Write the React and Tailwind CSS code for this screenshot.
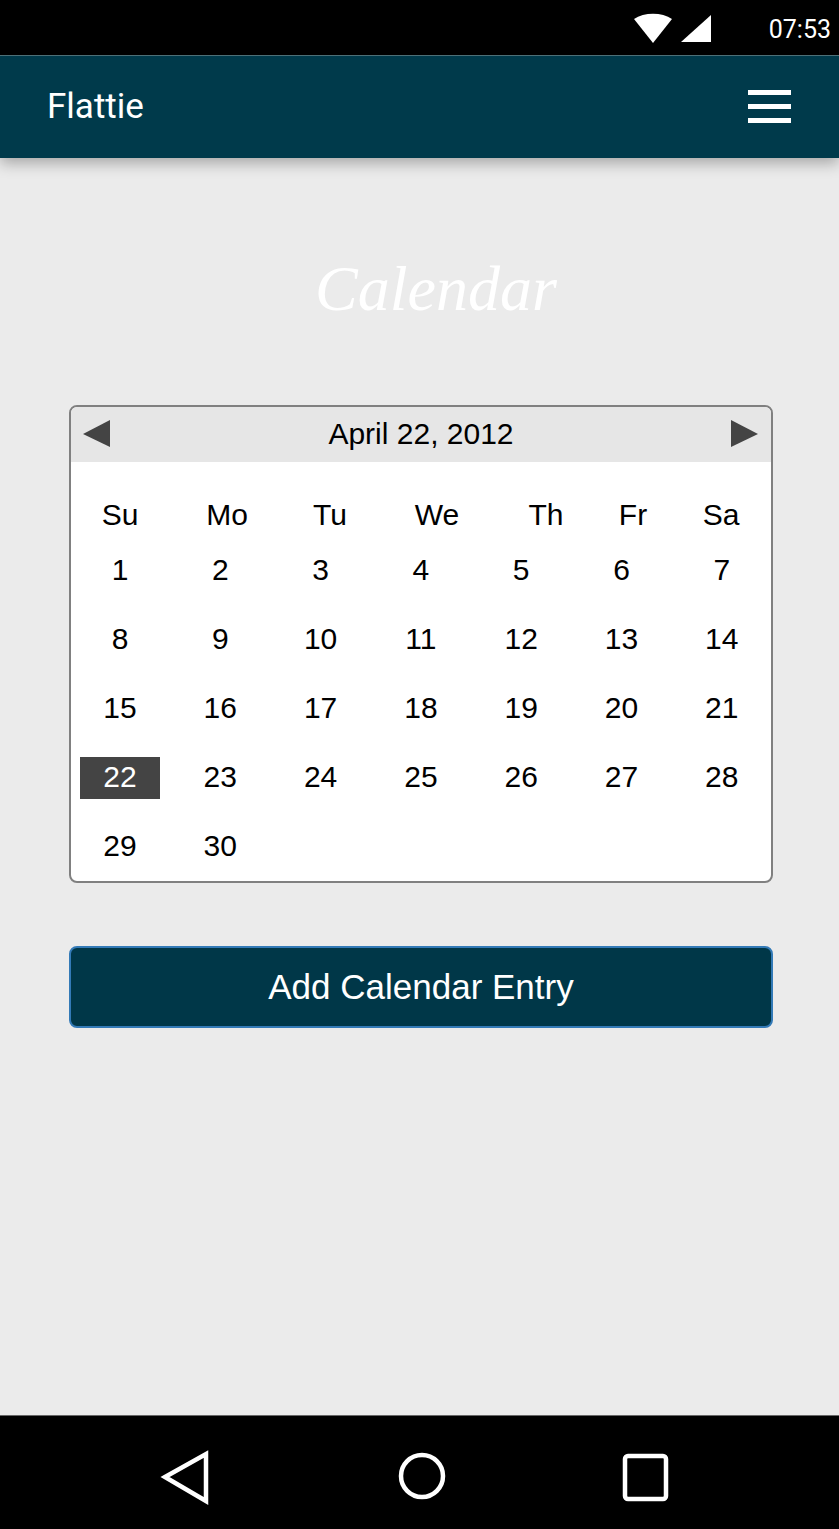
import React from "react";

const HEADERS = ["Su", "Mo", "Tu", "We", "Th", "Fr", "Sa"];
const DAYS = Array.from({ length: 30 }, (_, i) => i + 1);

function StatusBar() {
  return (
    <div className="h-[55px] bg-black flex items-center justify-end relative">
      <svg className="mr-[127px] mt-[3px]" width="78" height="32" viewBox="0 0 78 32">
        <path d="M0 6 C10 -1 28 -1 38 6 L19 30 Z" fill="#fff" />
        <path d="M47 29 L77 2 L77 29 Z" fill="#fff" />
      </svg>
      <span className="absolute right-[8px] top-[15px] text-[25px] leading-[30px] text-white font-['Roboto',sans-serif]">07:53</span>
    </div>
  );
}

function AppBar() {
  return (
    <div className="h-[103px] bg-[#003a4b] border-t border-[#4d7078] shadow-[0_5px_14px_rgba(0,0,0,0.3)] flex items-center justify-between pl-[47px] pr-[48px] relative z-10">
      <span className="text-[35px] leading-[44px] text-white font-['Roboto',sans-serif]">Flattie</span>
      <div className="flex flex-col gap-[9px] w-[43px] mt-[-2px]">
        <div className="h-[5px] bg-white" />
        <div className="h-[5px] bg-white" />
        <div className="h-[5px] bg-white" />
      </div>
    </div>
  );
}

function Calendar() {
  return (
    <div className="border-2 border-[#808080] rounded-[8px] bg-white overflow-hidden h-[478px]">
      <div className="h-[55px] bg-[#e6e6e6] flex items-center justify-between pl-[12px] pr-[13px] pb-[2px]">
        <svg width="28" height="28" viewBox="0 0 28 28"><path d="M0 14 L27 0 L27 27 Z" fill="#444" /></svg>
        <span className="text-[30px] leading-[36px] text-black ml-[1px]">April 22, 2012</span>
        <svg width="28" height="28" viewBox="0 0 28 28"><path d="M28 14 L1 0 L1 27 Z" fill="#444" /></svg>
      </div>
      <div className="grid grid-cols-[80px_134px_72px_142px_76px_98px_78px] pl-[9px] mt-[30px] h-[38px] items-center text-center text-[30px] text-black">
        {HEADERS.map((h) => <div key={h}>{h}</div>)}
      </div>
      <div className="grid grid-cols-[repeat(7,80px)] gap-x-[20.3px] gap-y-[27px] pl-[9px] mt-[20px] text-center text-[30px] text-black">
        {DAYS.map((d) => (
          <div key={d} className={`h-[42px] leading-[40px] ${d === 22 ? "bg-[#444444] text-white" : ""}`}>{d}</div>
        ))}
      </div>
    </div>
  );
}

function NavBar() {
  return (
    <div className="h-[114px] bg-black border-t border-[#666] relative">
      <svg className="absolute left-0 top-0" width="839" height="113" viewBox="0 0 839 113">
        <path d="M165 61 L206 38 L206 85 Z" fill="none" stroke="#fff" strokeWidth="4.5" />
        <circle cx="422" cy="60" r="21" fill="none" stroke="#fff" strokeWidth="4.5" />
        <rect x="625" y="40" width="41" height="43" rx="3" fill="none" stroke="#fff" strokeWidth="4.5" />
      </svg>
    </div>
  );
}

export default function App() {
  return (
    <div className="w-[839px] h-[1529px] flex flex-col bg-[#ebebeb] font-['Liberation_Sans',Arial,sans-serif] overflow-hidden">
      <StatusBar />
      <AppBar />
      <main className="flex-1 pl-[69px] pr-[66px]">
        <h1 className="h-[247px] pt-[86px] pl-[30px] text-center text-[64px] leading-[90px] text-white font-[cursive] italic">Calendar</h1>
        <Calendar />
        <button className="mt-[63px] w-full h-[82px] rounded-[8px] border-2 border-[#337ab7] bg-[#003748] text-white text-[35px] leading-[42px]">Add Calendar Entry</button>
      </main>
      <NavBar />
    </div>
  );
}
